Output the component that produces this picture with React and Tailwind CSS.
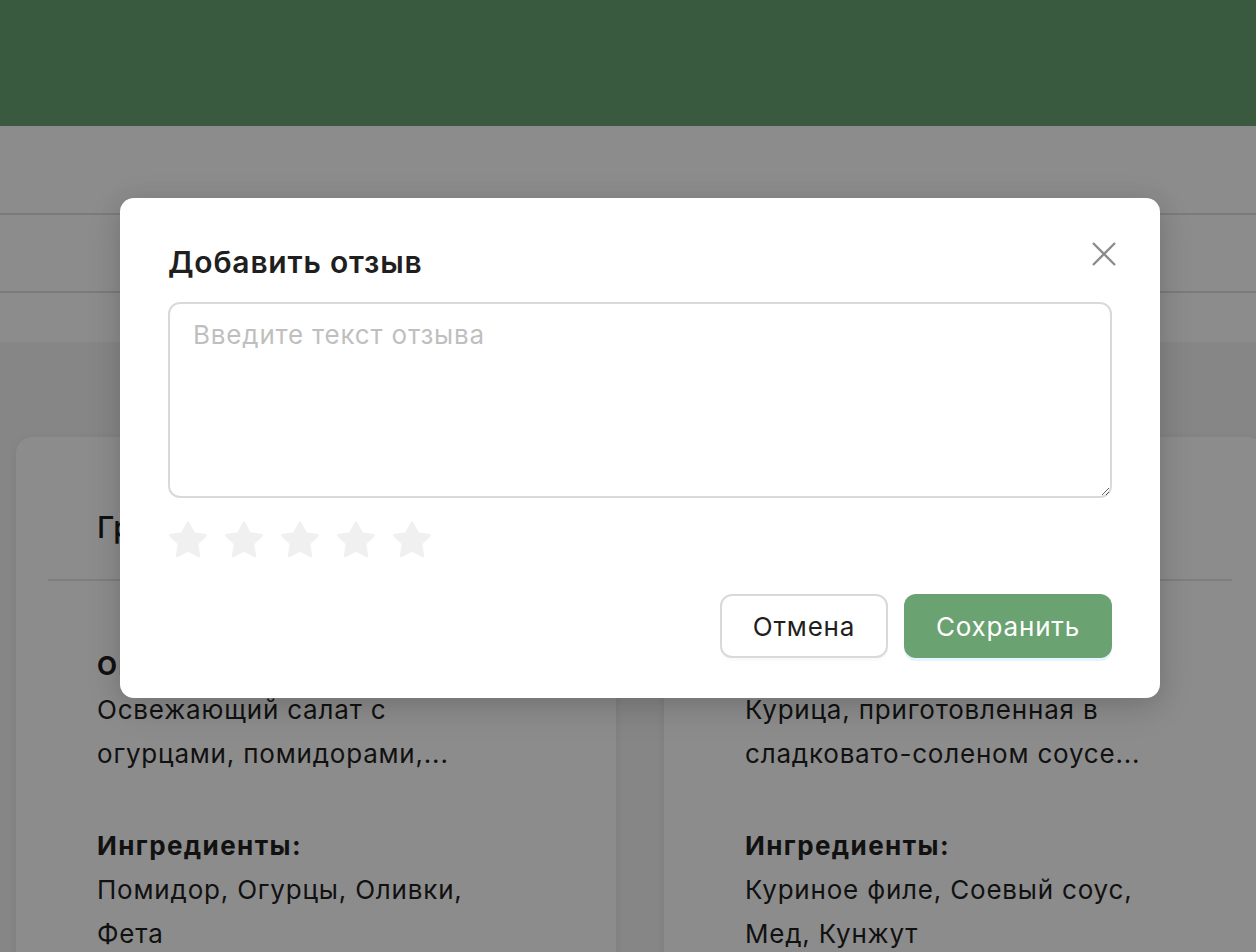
import React, { useState } from 'react';

const font = { fontFamily: 'Inter, "Noto Sans", sans-serif' };

const StarIcon = ({ className }) => (
    <svg viewBox="64 64 896 896" className={className} fill="currentColor">
        <path d="M908.1 353.1l-253.9-36.9L540.7 86.1c-3.1-6.3-8.2-11.4-14.5-14.5-15.8-7.8-35-1.3-42.9 14.5L369.8 316.2l-253.9 36.9c-7 1-13.4 4.3-18.3 9.3a32.05 32.05 0 00.6 45.3l183.7 179.1-43.4 252.9a31.95 31.95 0 0046.4 33.7L512 754l227.1 119.4c6.2 3.3 13.4 4.4 20.3 3.2 17.4-3 29.1-19.5 26.1-36.9l-43.4-252.9 183.7-179.1c5-4.9 8.3-11.3 9.3-18.3 2.7-17.5-9.5-33.7-27-36.3z" />
    </svg>
);

const DishCard = ({ title, desc, ingredients }) => (
    <div className="w-[600px] shrink-0 bg-white rounded-[16px] shadow-[0_2px_12px_rgba(0,0,0,0.08)] pt-[70px] px-[32px] pb-[40px]">
        <div className="px-[49px] h-[40px] leading-[40px] text-[30px] font-medium tracking-[0.6px] text-[#1f1f1f]">{title}</div>
        <div className="mt-[32px] border-b-2 border-[#e6e6e6]" />
        <div className="px-[49px] pt-[63px] text-[26px] leading-[44px] tracking-[0.8px] text-[#1f1f1f]">
            <div className="font-bold tracking-[1.4px]">Описание:</div>
            {desc.map((line) => (
                <div key={line}>{line}</div>
            ))}
            <div className="font-bold tracking-[1.4px] mt-[48px]">Ингредиенты:</div>
            {ingredients.map((line) => (
                <div key={line}>{line}</div>
            ))}
        </div>
    </div>
);

const ReviewModal = () => {
    const [text, setText] = useState('');
    const [rating, setRating] = useState(0);

    return (
        <div className="absolute left-[120px] top-[198px] w-[1040px] bg-white rounded-[14px] shadow-[0_9px_42px_rgba(0,0,0,0.08),0_6px_24px_rgba(0,0,0,0.12)] px-[48px] pt-[44px] pb-[40px]">
            <button className="absolute right-[44px] top-[44px] w-[24px] h-[24px] text-[#8c8c8c]">
                <svg viewBox="0 0 24 24" className="w-[24px] h-[24px]" stroke="currentColor" strokeWidth="2.4" fill="none">
                    <path d="M1 1L23 23M23 1L1 23" />
                </svg>
            </button>
            <h2 className="h-[40px] leading-[40px] text-[30px] font-semibold tracking-[0.8px] text-[#1f1f1f]">Добавить отзыв</h2>
            <textarea
                value={text}
                onChange={(e) => setText(e.target.value)}
                placeholder="Введите текст отзыва"
                className="block mt-[20px] w-full h-[196px] border-2 border-[#d9d9d9] rounded-[12px] px-[23px] pt-[13px] text-[26px] leading-[36px] tracking-[0.8px] text-[#1f1f1f] placeholder:text-[#bfbfbf] outline-none resize-y"
                style={font}
            />
            <div className="flex gap-[16px] mt-[23px]">
                {[1, 2, 3, 4, 5].map((n) => (
                    <button key={n} onClick={() => setRating(n)} className="w-[40px] h-[40px] flex items-center justify-center">
                        <StarIcon className={n <= rating ? 'w-[40px] h-[40px] text-[#fadb14]' : 'w-[40px] h-[40px] text-[#f0f0f0]'} />
                    </button>
                ))}
            </div>
            <div className="flex justify-end gap-[16px] mt-[33px]">
                <button className="w-[168px] h-[64px] border-2 border-[#d9d9d9] rounded-[12px] bg-white text-[26px] tracking-[0.8px] text-[#1f1f1f] shadow-[0_3px_0_rgba(0,0,0,0.02)]">
                    Отмена
                </button>
                <button className="w-[208px] h-[64px] rounded-[12px] bg-[#6aa371] text-[26px] tracking-[0.8px] text-white shadow-[0_3px_0_rgba(5,145,255,0.1)]">
                    Сохранить
                </button>
            </div>
        </div>
    );
};

export default function App() {
    return (
        <div className="relative w-[1256px] h-[952px] overflow-hidden bg-[#f5f5f5]" style={font}>
            {/* Header */}
            <div className="h-[126px] bg-[#6ba474]" />
            <div className="bg-white">
                <div className="h-[89px] border-b-2 border-[#e0e0e0]" />
                <div className="h-[78px] border-b-2 border-[#e0e0e0]" />
                <div className="h-[49px]" />
            </div>

            {/* Cards */}
            <div className="flex gap-[48px] px-[16px] pt-[95px]">
                <DishCard
                    title="Греческий салат"
                    desc={['Освежающий салат с', 'огурцами, помидорами,...']}
                    ingredients={['Помидор, Огурцы, Оливки,', 'Фета']}
                />
                <DishCard
                    title="Курица терияки"
                    desc={['Курица, приготовленная в', 'сладковато-соленом соусе...']}
                    ingredients={['Куриное филе, Соевый соус,', 'Мед, Кунжут']}
                />
            </div>

            {/* Overlay */}
            <div className="absolute inset-0 bg-black/45">
                <ReviewModal />
            </div>
        </div>
    );
}
